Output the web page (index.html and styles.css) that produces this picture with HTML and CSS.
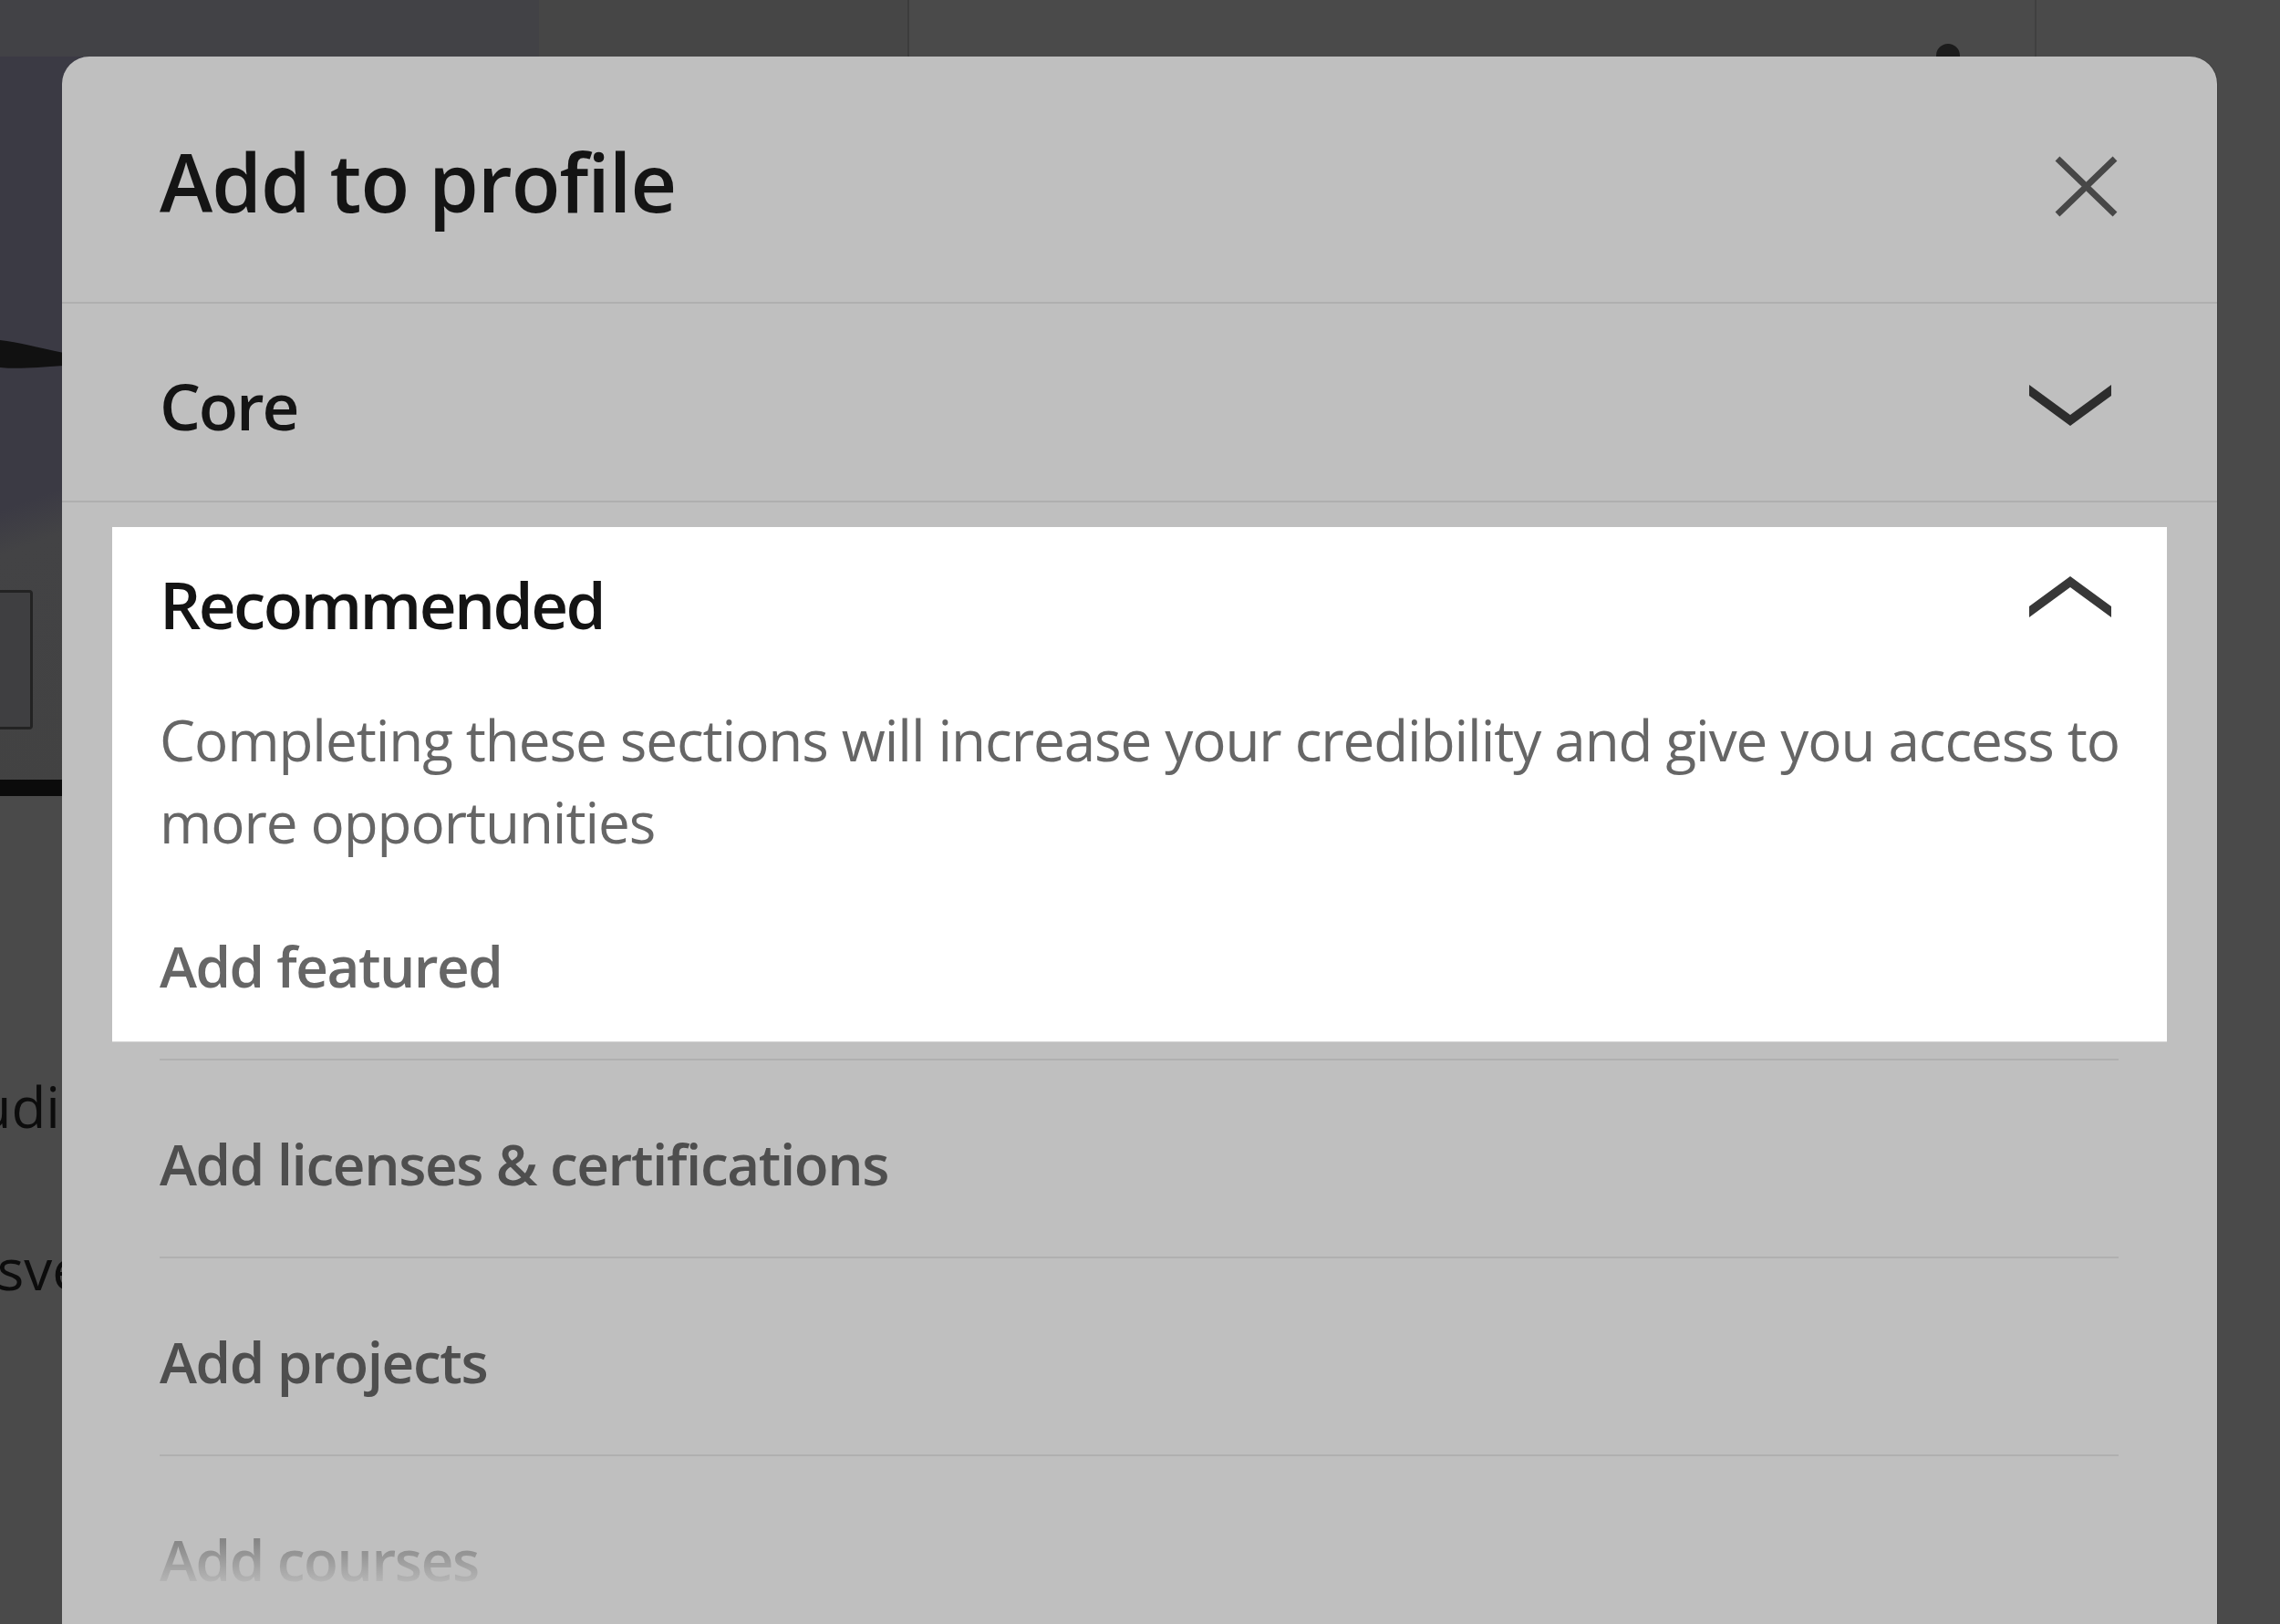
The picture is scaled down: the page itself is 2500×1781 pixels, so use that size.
FILE: index.html
```html
<!DOCTYPE html>
<html lang="en">
<head>
<meta charset="utf-8">
<title>Add to profile</title>
<link rel="stylesheet" href="styles.css">
</head>
<body>
  <div class="backdrop">
    <div class="bg-top">
      <div class="bg-t1"></div>
      <div class="bg-t2"></div>
      <div class="bg-t3">
        <span class="bg-knob"></span>
        <span class="bg-rule"></span>
      </div>
    </div>
    <div class="bg-body">
      <div class="bg-side">
        <div class="bg-hero">
          <svg class="bg-wedge" width="70" height="34" viewBox="0 0 70 34"><path d="M0 2 C20 4 40 10 70 16 L70 30 C40 32 20 34 0 32 Z" fill="#111"/></svg>
          <div class="bg-box"></div>
        </div>
        <div class="bg-bar"></div>
        <div class="bg-lower">
          <div class="bg-line bg-l1"><span>Studi</span></div>
          <div class="bg-line bg-l2"><span>Ansve</span></div>
        </div>
      </div>
    </div>
  </div>

  <div class="modal" role="dialog" aria-label="Add to profile">
    <header class="modal-head">
      <h1 class="modal-title">Add to profile</h1>
      <button class="close" aria-label="Dismiss">
        <svg width="69" height="67" viewBox="0 0 69 67"><path d="M3 3 L66 64 M66 3 L3 64" stroke="#474747" stroke-width="7" fill="none"/></svg>
      </button>
    </header>

    <section class="group-core">
      <h2 class="group-title">Core</h2>
      <svg class="chev" width="90" height="45" viewBox="0 0 90 45"><polygon points="0,0 45,33 90,0 90,12 45,45 0,12" fill="#2d2d2d"/></svg>
    </section>

    <section class="group-rec">
      <div class="spot">
        <div class="spot-head">
          <h2 class="group-title rec-title">Recommended</h2>
          <svg class="chev-up" width="90" height="45" viewBox="0 0 90 45"><polygon points="0,33 45,0 90,33 90,45 45,12 0,45" fill="#383838"/></svg>
        </div>
        <p class="desc">Completing these sections will increase your credibility and give you access to more opportunities</p>
        <div class="feat">Add featured</div>
      </div>
      <ul class="items">
        <li>Add licenses &amp; certifications</li>
        <li>Add projects</li>
        <li><span class="fade">Add courses</span></li>
      </ul>
    </section>
  </div>
</body>
</html>
```

FILE: styles.css
```css
* { box-sizing: border-box; }

html, body {
  margin: 0;
  padding: 0;
}

body {
  width: 2500px;
  height: 1781px;
  overflow: hidden;
  position: relative;
  background: #4a4a4a;
  font-family: "Open Sans", "Noto Sans", "Liberation Sans", sans-serif;
}

/* ---------- page behind the dialog ---------- */
.backdrop {
  display: flex;
  flex-direction: column;
  height: 100%;
}

.bg-top {
  display: flex;
  height: 62px;
  flex: none;
}

.bg-t1 { width: 591px; background: #424246; }
.bg-t2 { width: 406px; background: #464646; border-right: 2px solid #3c3c3c; }

.bg-t3 {
  flex: 1;
  display: flex;
  align-items: flex-end;
  padding-left: 1126px;
  background: #4a4a4a;
}

.bg-knob {
  width: 26px;
  height: 14px;
  border-radius: 13px 13px 0 0;
  background: #1c1c1c;
}

.bg-rule {
  align-self: stretch;
  width: 2px;
  margin-left: 82px;
  background: #404040;
}

.bg-body {
  display: flex;
  flex: 1;
}

.bg-side {
  width: 100px;
  display: flex;
  flex-direction: column;
}

.bg-hero {
  height: 793px;
  display: flex;
  flex-direction: column;
  background: linear-gradient(160deg, #3b3a44 0, #3b3a44 60%, #434345 66%, #424242 100%);
}

.bg-wedge {
  margin-top: 309px;
  flex: none;
}

.bg-box {
  margin-top: 242px;
  width: 36px;
  height: 153px;
  border: 3px solid #232323;
  border-left: 0;
  border-radius: 0 4px 4px 0;
  background: #3f3f41;
}

.bg-bar {
  height: 18px;
  background: #0b0b0b;
}

.bg-lower {
  padding-top: 295px;
  color: #0c0c0c;
  font-size: 62px;
  line-height: 90px;
}

.bg-line {
  display: flex;
  justify-content: flex-end;
  white-space: nowrap;
  overflow: visible;
}

.bg-line span { flex: none; }
.bg-l1 { padding-right: 34px; }
.bg-l2 { margin-top: 88px; padding-right: 8px; }

/* ---------- dialog ---------- */
.modal {
  position: absolute;
  left: 68px;
  top: 62px;
  width: 2363px;
  height: 1719px;
  background: #bfbfbf;
  border-radius: 30px 30px 0 0;
  overflow: hidden;
  box-shadow: 1px 0 0 #3f3f3f;
}

.modal-head {
  display: flex;
  justify-content: space-between;
  align-items: flex-start;
  height: 271px;
  padding: 87px 109px 0 107px;
  border-bottom: 2px solid #afafaf;
}

.modal-title {
  margin: 0;
  font-size: 88px;
  font-weight: 600;
  line-height: 100px;
  letter-spacing: -1px;
  color: #141414;
}

.close {
  margin-top: 22px;
  padding: 0;
  border: 0;
  background: none;
  width: 69px;
  height: 67px;
  display: flex;
}

.group-title {
  margin: 0;
  font-size: 71px;
  font-weight: 600;
  line-height: 90px;
  letter-spacing: -2.2px;
  color: #141414;
}

.rec-title { letter-spacing: -2.6px; }

.group-core {
  display: flex;
  justify-content: space-between;
  align-items: center;
  height: 218px;
  padding: 7px 116px 0 107px;
  border-bottom: 2px solid #afafaf;
}

.chev, .chev-up { flex: none; display: block; }

.group-rec {
  padding-top: 27px;
}

.spot {
  margin: 0 55px;
  background: #ffffff;
  padding: 40px 0 38px 52px;
  box-shadow: 0 1px 0 #d4d4d4;
}

.spot-head {
  display: flex;
  justify-content: space-between;
  align-items: flex-start;
  padding-right: 61px;
}

.chev-up { margin-top: 14px; }

.desc {
  margin: 58px 0 0;
  padding-right: 20px;
  font-size: 62px;
  line-height: 90px;
  letter-spacing: -1.08px;
  color: #666666;
}

.feat {
  margin-top: 68px;
  font-size: 62px;
  font-weight: 600;
  line-height: 90px;
  letter-spacing: -1.5px;
  color: #666666;
}

.items {
  list-style: none;
  margin: 19px 108px 0 107px;
  padding: 0;
}

.items li {
  height: 217px;
  padding-top: 68px;
  border-top: 2px solid #b0b0b0;
  font-size: 62px;
  font-weight: 600;
  line-height: 90px;
  letter-spacing: -1.4px;
  color: #4e4e4e;
}

.fade {
  display: inline-block;
  background: linear-gradient(to bottom, #848484 25%, #b9b9b9 82%);
  -webkit-background-clip: text;
  background-clip: text;
  color: transparent;
}
```
